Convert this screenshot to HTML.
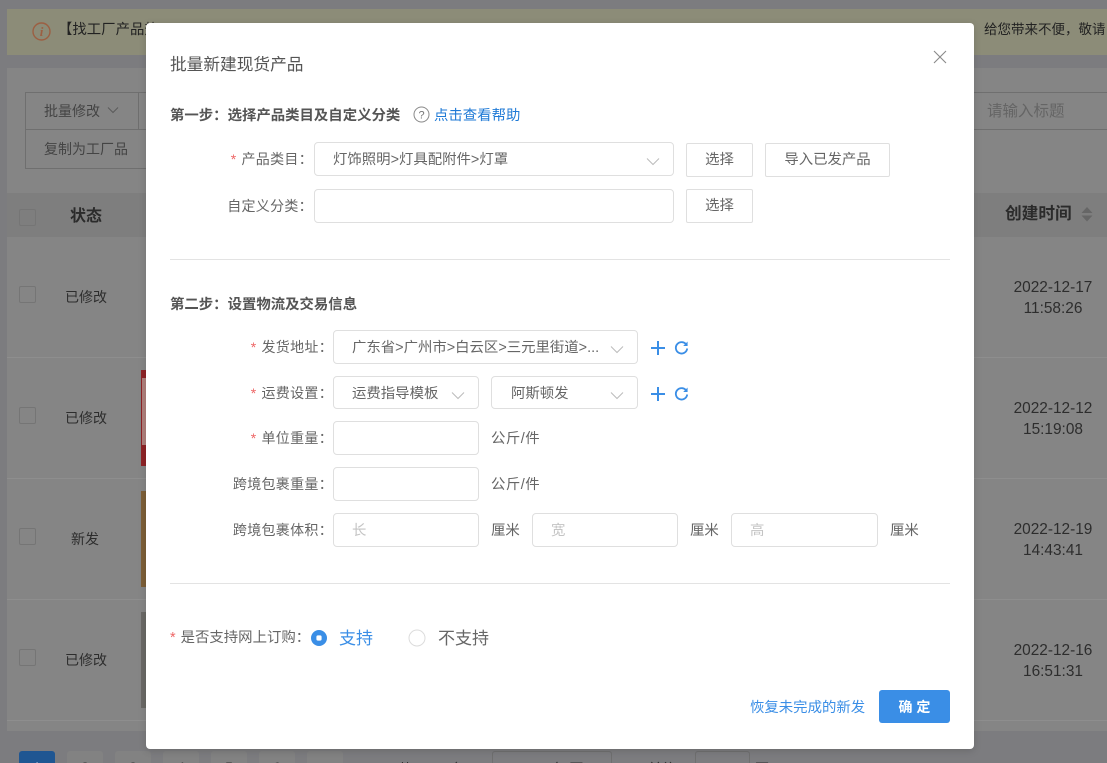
<!DOCTYPE html>
<html lang="zh"><head><meta charset="utf-8"><title>批量新建现货产品</title>
<style>
*{box-sizing:border-box}
html,body{margin:0;padding:0;width:1107px;height:763px;overflow:hidden}
body{font-family:"Liberation Sans","Noto Sans CJK SC",sans-serif;color:#666}
#w{position:relative;width:1107px;height:763px;overflow:hidden;background:#7c7c7f}
.a{position:absolute;white-space:nowrap}
.bx{position:absolute;background:#fff;border:1px solid #dfdfdf;border-radius:4px}
.t{position:absolute;white-space:nowrap;font-size:14.4px;line-height:20px;color:#666;margin-top:1px}
.l{position:absolute;white-space:nowrap;font-size:14px;line-height:20px;letter-spacing:.3px;color:#666;text-align:right}
.s{color:#e66;margin-right:5px}
.btn{position:absolute;background:#fff;border:1px solid #dfdfdf;border-radius:2px;font-size:14.4px;color:#666;text-align:center;line-height:33px;height:34px}
.b{position:absolute;white-space:nowrap;font-size:14.4px;line-height:20px;color:#555;font-weight:700}
.hr{position:absolute;left:170px;width:780px;height:1px;background:#e3e3e3}
.ph{color:#c4c4c4}
.row{position:absolute;left:7px;width:1100px;height:1px;background:#8e8e8e}
.d{color:#2d2d2d;font-size:14px;line-height:20px;position:absolute;white-space:nowrap;text-align:center}
.dt{color:#2d2d2d;font-size:15.4px;line-height:21px;position:absolute;white-space:nowrap;text-align:center;left:1003px;width:100px}
.cb{position:absolute;left:19px;width:17px;height:17px;border:1px solid #757575;border-radius:2px}
.pg{position:absolute;top:751px;width:36px;height:30px;background:#828282;border-radius:3px;color:#2d2d2d;font-size:14px;text-align:center;line-height:32px}
</style></head>
<body>
<div id="w">
<!-- background page -->
<div class="a" style="left:7px;top:9px;width:1100px;height:46px;background:#8c8c78"></div>
<svg class="a" style="left:31px;top:21px" width="21" height="21" viewBox="0 0 21 21"><circle cx="10.5" cy="10.5" r="8.5" fill="none" stroke="#9c5f42" stroke-width="1.4"/><text x="10.5" y="15" text-anchor="middle" font-size="13" font-style="italic" font-family="Liberation Serif,serif" fill="#9c5f42" font-weight="700">i</text></svg>
<div class="a" style="left:58px;top:20px;font-size:14.4px;line-height:20px;color:#222">【找工厂产品热</div>
<div class="a" style="left:984px;top:20px;font-size:13.5px;line-height:20px;color:#222">给您带来不便，敬请</div>
<div class="a" style="left:7px;top:68px;width:1100px;height:125px;background:#858585"></div>
<div class="a" style="left:25px;top:92px;width:1082px;height:1px;background:#6f6f6f"></div>
<div class="a" style="left:25px;top:129px;width:1082px;height:1px;background:#6f6f6f"></div>
<div class="a" style="left:25px;top:168px;width:121px;height:1px;background:#6f6f6f"></div>
<div class="a" style="left:25px;top:92px;width:1px;height:77px;background:#6f6f6f"></div>
<div class="a" style="left:138px;top:92px;width:1px;height:37px;background:#6f6f6f"></div>
<div class="a" style="left:44px;top:101px;font-size:14px;line-height:20px;color:#444">批量修改</div>
<svg class="a" style="left:107px;top:106px" width="12" height="8" viewBox="0 0 12 8"><path d="M1 1.5 6 6.5 11 1.5" fill="none" stroke="#5a5a5a" stroke-width="1"/></svg>
<div class="a" style="left:44px;top:139px;font-size:14px;line-height:20px;color:#444">复制为工厂品</div>
<div class="a" style="left:987px;top:102px;font-size:15.5px;line-height:20px;color:#656565">请输入标题</div>
<div class="a" style="left:7px;top:193px;width:1100px;height:44px;background:#7e7e7e"></div>
<div class="cb" style="top:209px"></div>
<div class="a" style="left:70px;top:206px;font-size:16px;line-height:22px;font-weight:700;color:#2b2b2b">状态</div>
<div class="a" style="left:1005px;top:203px;font-size:16.7px;line-height:22px;font-weight:700;color:#2b2b2b">创建时间</div>
<svg class="a" style="left:1081px;top:207px" width="12" height="15" viewBox="0 0 12 15"><path d="M6 0 11.5 6H.5ZM6 14.5.5 8.5H11.5Z" fill="#666"/></svg>
<div class="a" style="left:7px;top:237px;width:1100px;height:494px;background:#858585"></div>
<div class="row" style="top:357px"></div><div class="row" style="top:478px"></div><div class="row" style="top:599px"></div><div class="row" style="top:720px"></div>
<div class="cb" style="top:286px"></div><div class="cb" style="top:407px"></div><div class="cb" style="top:528px"></div><div class="cb" style="top:649px"></div>
<div class="d" style="left:65px;top:287px">已修改</div>
<div class="d" style="left:65px;top:408px">已修改</div>
<div class="d" style="left:71px;top:529px">新发</div>
<div class="d" style="left:65px;top:650px">已修改</div>
<div class="a" style="left:141px;top:370px;width:6px;height:96px;background:#8e2326"><div style="position:absolute;left:1px;top:8px;width:5px;height:67px;background:#b0807c"></div></div>
<div class="a" style="left:141px;top:491px;width:6px;height:96px;background:#7d5f38"></div>
<div class="a" style="left:141px;top:612px;width:6px;height:96px;background:#6a6966"></div>
<div class="dt" style="top:277px">2022-12-17<br>11:58:26</div>
<div class="dt" style="top:398px">2022-12-12<br>15:19:08</div>
<div class="dt" style="top:519px">2022-12-19<br>14:43:41</div>
<div class="dt" style="top:640px">2022-12-16<br>16:51:31</div>
<div class="pg" style="left:19px;background:#1f5692;color:#cfdcec">1</div>
<div class="pg" style="left:67px">2</div>
<div class="pg" style="left:115px">3</div>
<div class="pg" style="left:163px">4</div>
<div class="pg" style="left:211px">5</div>
<div class="pg" style="left:259px">6</div>
<div class="pg" style="left:307px">...</div>
<div class="a" style="left:362px;top:759px;font-size:14px;line-height:20px;color:#2d2d2d">31</div>
<div class="a" style="left:398px;top:759px;font-size:14px;line-height:20px;color:#2d2d2d">共 1213 条</div>
<div class="a" style="left:492px;top:751px;width:120px;height:30px;border:1px solid #6f6f6f;border-radius:3px"></div>
<div class="a" style="left:532px;top:759px;font-size:14px;line-height:20px;color:#2d2d2d">10 条/页</div>
<div class="a" style="left:648px;top:759px;font-size:14px;line-height:20px;color:#2d2d2d">前往</div>
<div class="a" style="left:695px;top:751px;width:55px;height:30px;border:1px solid #6f6f6f;border-radius:3px"></div>
<div class="a" style="left:755px;top:759px;font-size:14px;line-height:20px;color:#2d2d2d">页</div>
<!-- modal -->
<div class="a" style="left:146px;top:23px;width:828px;height:726px;background:#fff;border-radius:4px;box-shadow:0 2px 8px rgba(0,0,0,.15)"></div>
<svg class="a" style="left:933px;top:50px" width="14" height="14" viewBox="0 0 14 14"><path d="M1 1 13 13M13 1 1 13" stroke="#8a8a8a" stroke-width="1.1" fill="none"/></svg>
<div class="a" style="left:170px;top:54px;font-size:16.7px;line-height:22px;color:#555">批量新建现货产品</div>

<div class="b" style="left:170px;top:106px">第一步：选择产品类目及自定义分类</div>
<svg class="a" style="left:413px;top:106px" width="17" height="17" viewBox="0 0 17 17"><circle cx="8.5" cy="8.5" r="7.5" fill="none" stroke="#888" stroke-width="1"/><text x="8.5" y="12.5" text-anchor="middle" font-size="11" font-family="Liberation Sans,sans-serif" fill="#777">?</text></svg>
<div class="a" style="left:434px;top:106px;font-size:14.4px;line-height:20px;color:#1f7ad6">点击查看帮助</div>

<div class="l" style="right:802px;top:149px;transform:translateX(8px)"><span class="s">*</span>产品类目：</div>
<div class="bx" style="left:314px;top:142px;width:360px;height:34px"></div>
<div class="t" style="left:333px;top:149px">灯饰照明&gt;灯具配附件&gt;灯罩</div>
<svg class="a" style="left:646px;top:157px" width="14" height="9" viewBox="0 0 14 9"><path d="M1 1.5 7 7.5 13 1.5" fill="none" stroke="#bbb" stroke-width="1"/></svg>
<div class="btn" style="left:686px;top:143px;width:67px">选择</div>
<div class="btn" style="left:765px;top:143px;width:125px">导入已发产品</div>

<div class="l" style="right:794px;top:196px">自定义分类：</div>
<div class="bx" style="left:314px;top:189px;width:360px;height:34px"></div>
<div class="btn" style="left:686px;top:189px;width:67px">选择</div>

<div class="hr" style="top:259px"></div>

<div class="b" style="left:170px;top:295px">第二步：设置物流及交易信息</div>

<div class="l" style="right:774px;top:337px"><span class="s">*</span>发货地址：</div>
<div class="bx" style="left:333px;top:330px;width:305px;height:34px"></div>
<div class="t" style="left:352px;top:337px">广东省&gt;广州市&gt;白云区&gt;三元里街道&gt;...</div>
<svg class="a" style="left:610px;top:345px" width="14" height="9" viewBox="0 0 14 9"><path d="M1 1.5 7 7.5 13 1.5" fill="none" stroke="#bbb" stroke-width="1"/></svg>
<svg class="a" style="left:650px;top:340px" width="16" height="16" viewBox="0 0 16 16"><path d="M8 1V15M1 8H15" stroke="#3a8ee6" stroke-width="2" fill="none"/></svg>
<svg class="a" style="left:674px;top:340px" width="15" height="15" viewBox="0 0 15 15"><path d="M12.6 5.2A5.7 5.7 0 1 0 13.2 8.5" stroke="#3a8ee6" stroke-width="1.8" fill="none"/><path d="M13.6 1.5V6H9.2Z" fill="#3a8ee6"/></svg>

<div class="l" style="right:774px;top:383px"><span class="s">*</span>运费设置：</div>
<div class="bx" style="left:333px;top:376px;width:146px;height:33px"></div>
<div class="t" style="left:352px;top:383px">运费指导模板</div>
<svg class="a" style="left:451px;top:391px" width="14" height="9" viewBox="0 0 14 9"><path d="M1 1.5 7 7.5 13 1.5" fill="none" stroke="#bbb" stroke-width="1"/></svg>
<div class="bx" style="left:491px;top:376px;width:147px;height:33px"></div>
<div class="t" style="left:511px;top:383px">阿斯顿发</div>
<svg class="a" style="left:610px;top:391px" width="14" height="9" viewBox="0 0 14 9"><path d="M1 1.5 7 7.5 13 1.5" fill="none" stroke="#bbb" stroke-width="1"/></svg>
<svg class="a" style="left:650px;top:386px" width="16" height="16" viewBox="0 0 16 16"><path d="M8 1V15M1 8H15" stroke="#3a8ee6" stroke-width="2" fill="none"/></svg>
<svg class="a" style="left:674px;top:386px" width="15" height="15" viewBox="0 0 15 15"><path d="M12.6 5.2A5.7 5.7 0 1 0 13.2 8.5" stroke="#3a8ee6" stroke-width="1.8" fill="none"/><path d="M13.6 1.5V6H9.2Z" fill="#3a8ee6"/></svg>

<div class="l" style="right:774px;top:428px"><span class="s">*</span>单位重量：</div>
<div class="bx" style="left:333px;top:421px;width:146px;height:34px"></div>
<div class="t" style="left:491px;top:428px;letter-spacing:.5px">公斤/件</div>

<div class="l" style="right:774px;top:474px">跨境包裹重量：</div>
<div class="bx" style="left:333px;top:467px;width:146px;height:34px"></div>
<div class="t" style="left:491px;top:474px;letter-spacing:.5px">公斤/件</div>

<div class="l" style="right:774px;top:520px">跨境包裹体积：</div>
<div class="bx" style="left:333px;top:513px;width:146px;height:34px"></div>
<div class="t ph" style="left:352px;top:520px">长</div>
<div class="t" style="left:491px;top:520px">厘米</div>
<div class="bx" style="left:532px;top:513px;width:146px;height:34px"></div>
<div class="t ph" style="left:551px;top:520px">宽</div>
<div class="t" style="left:690px;top:520px">厘米</div>
<div class="bx" style="left:731px;top:513px;width:147px;height:34px"></div>
<div class="t ph" style="left:750px;top:520px">高</div>
<div class="t" style="left:890px;top:520px">厘米</div>

<div class="hr" style="top:583px"></div>

<div class="t" style="left:170px;top:627px"><span class="s">*</span>是否支持网上订购：</div>
<svg class="a" style="left:310px;top:629px" width="18" height="18" viewBox="0 0 18 18"><circle cx="9" cy="9" r="8" fill="#3a8ee6"/><rect x="6.4" y="6.4" width="5.2" height="5.2" rx="1.6" fill="#fff"/></svg>
<div class="a" style="left:339px;top:628px;font-size:17px;line-height:22px;color:#3a8ee6">支持</div>
<svg class="a" style="left:408px;top:629px" width="18" height="18" viewBox="0 0 18 18"><circle cx="9" cy="9" r="8" fill="#fff" stroke="#dcdcdc" stroke-width="1"/></svg>
<div class="a" style="left:438px;top:628px;font-size:17px;line-height:22px;color:#666">不支持</div>

<div class="a" style="left:750px;top:698px;font-size:14.4px;line-height:20px;color:#3a8ee6">恢复未完成的新发</div>
<div class="a" style="left:879px;top:690px;width:71px;height:33px;background:#3a8ee6;border-radius:3px;color:#fff;font-size:14px;font-weight:700;line-height:34px;text-align:center">确 定</div>
</div>
</body></html>
